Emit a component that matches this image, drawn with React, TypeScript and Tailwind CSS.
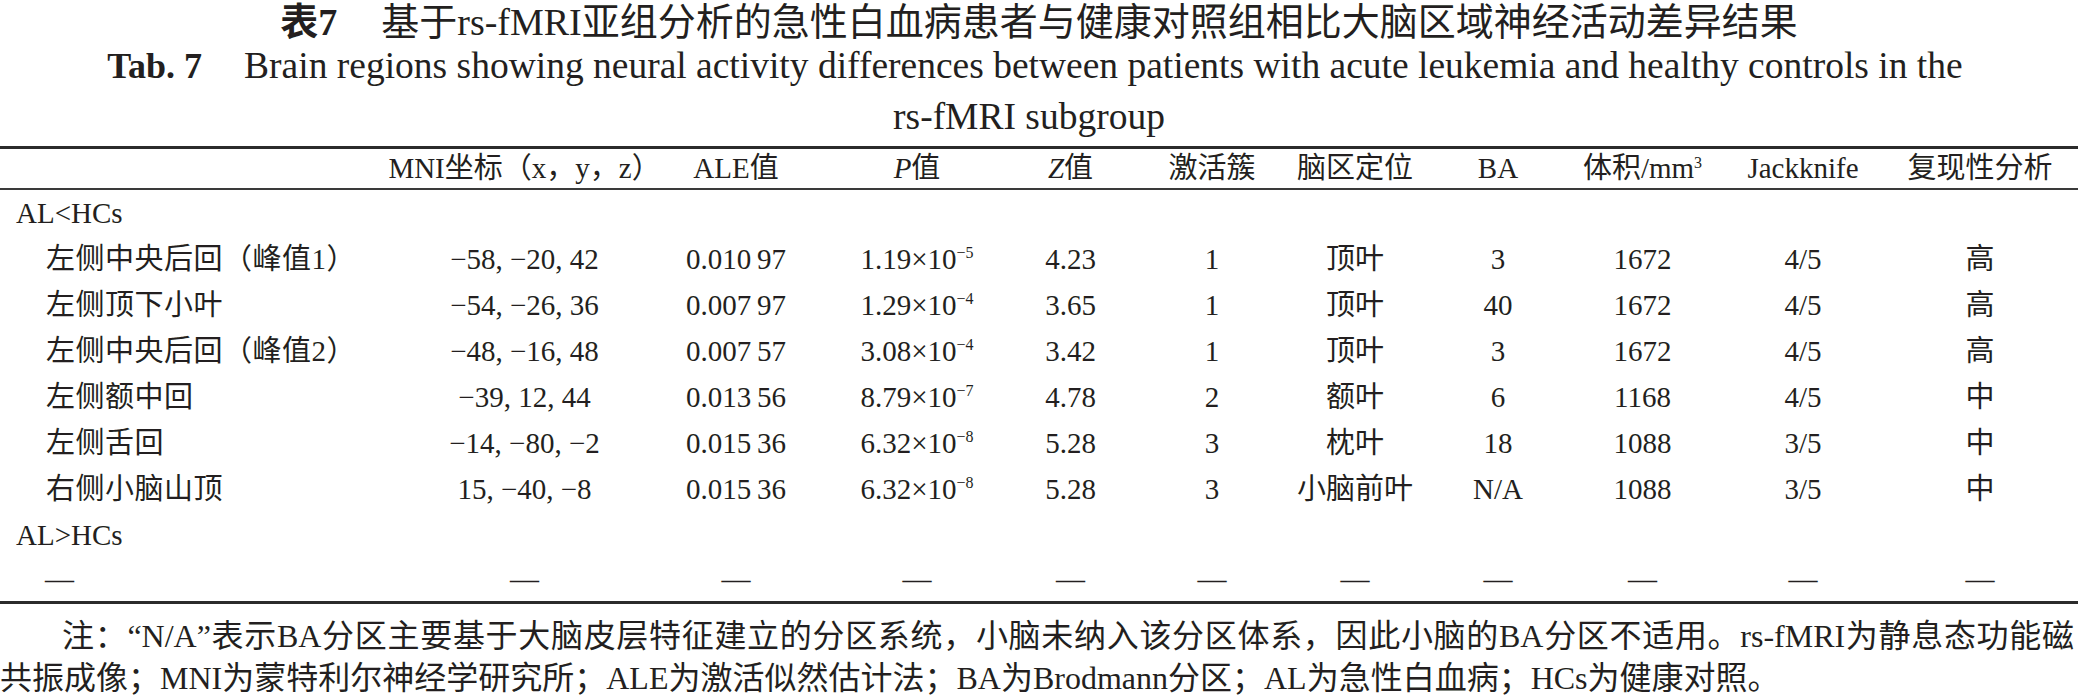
const serif = "font-['Liberation_Serif','Noto_Sans_CJK_SC',serif]";
const cols =
  "grid grid-cols-[412px_225px_198px_164px_143px_140px_146px_140px_149px_172px_182px]";

type Row = {
  region: string;
  mni: string;
  ale: string;
  p: [string, string];
  z: string;
  cluster: string;
  lobe: string;
  ba: string;
  volume: string;
  jack: string;
  repro: string;
};

const rows: Row[] = [
  { region: "左侧中央后回（峰值1）", mni: "−58, −20, 42", ale: "0.010\u200997", p: ["1.19", "−5"], z: "4.23", cluster: "1", lobe: "顶叶", ba: "3", volume: "1672", jack: "4/5", repro: "高" },
  { region: "左侧顶下小叶", mni: "−54, −26, 36", ale: "0.007\u200997", p: ["1.29", "−4"], z: "3.65", cluster: "1", lobe: "顶叶", ba: "40", volume: "1672", jack: "4/5", repro: "高" },
  { region: "左侧中央后回（峰值2）", mni: "−48, −16, 48", ale: "0.007\u200957", p: ["3.08", "−4"], z: "3.42", cluster: "1", lobe: "顶叶", ba: "3", volume: "1672", jack: "4/5", repro: "高" },
  { region: "左侧额中回", mni: "−39, 12, 44", ale: "0.013\u200956", p: ["8.79", "−7"], z: "4.78", cluster: "2", lobe: "额叶", ba: "6", volume: "1168", jack: "4/5", repro: "中" },
  { region: "左侧舌回", mni: "−14, −80, −2", ale: "0.015\u200936", p: ["6.32", "−8"], z: "5.28", cluster: "3", lobe: "枕叶", ba: "18", volume: "1088", jack: "3/5", repro: "中" },
  { region: "右侧小脑山顶", mni: "15, −40, −8", ale: "0.015\u200936", p: ["6.32", "−8"], z: "5.28", cluster: "3", lobe: "小脑前叶", ba: "N/A", volume: "1088", jack: "3/5", repro: "中" },
];

function Sci({ base, exp }: { base: string; exp: string }) {
  return (
    <span>
      {base}×10<sup className="text-[16px] -top-[0.65em]">{exp}</sup>
    </span>
  );
}

export default function App() {
  return (
    <div className={`w-[2078px] h-[696px] bg-white text-[#231f20] ${serif} overflow-hidden`}>
      {/* caption */}
      <div className="flex flex-col items-center">
        <div className="h-[44px] flex items-center text-[38px] leading-none">
          <span className="font-bold">表7</span>
          <span className="ml-[44px]">基于rs-fMRI亚组分析的急性白血病患者与健康对照组相比大脑区域神经活动差异结果</span>
        </div>
        <div className="h-[44px] flex items-center leading-none mr-[8px]">
          <span className="font-bold text-[36px]">Tab. 7</span>
          <span className="ml-[42px] text-[37.5px]">
            Brain regions showing neural activity differences between patients with acute leukemia and healthy controls in the
          </span>
        </div>
        <div className="h-[58px] flex items-center text-[37.5px] leading-none mr-[20px]">rs-fMRI subgroup</div>
      </div>

      {/* table */}
      <div className="border-t-[3px] border-[#2b2b2b] text-[29px] leading-none">
        <div className={`${cols} h-[41px] items-center border-b-2 border-[#3a3a3a]`}>
          <div />
          <div className="flex justify-center whitespace-nowrap">MNI坐标（x，y，z）</div>
          <div className="flex justify-center whitespace-nowrap">ALE值</div>
          <div className="flex justify-center whitespace-nowrap"><i>P</i>值</div>
          <div className="flex justify-center whitespace-nowrap"><i>Z</i>值</div>
          <div className="flex justify-center whitespace-nowrap">激活簇</div>
          <div className="flex justify-center whitespace-nowrap">脑区定位</div>
          <div className="flex justify-center whitespace-nowrap">BA</div>
          <div className="flex justify-center whitespace-nowrap">
            <span>体积/mm<sup className="text-[16px] -top-[0.65em]">3</sup></span>
          </div>
          <div className="flex justify-center whitespace-nowrap">Jackknife</div>
          <div className="flex justify-center whitespace-nowrap">复现性分析</div>
        </div>

        <div className="h-[46px] flex items-center pl-[16px]">AL&lt;HCs</div>
        {rows.map((r) => (
          <div key={r.region} className={`${cols} h-[46px] items-center text-center whitespace-nowrap`}>
            <div className="text-left pl-[46px] tracking-[0.5px]">{r.region}</div>
            <div>{r.mni}</div>
            <div>{r.ale}</div>
            <div><Sci base={r.p[0]} exp={r.p[1]} /></div>
            <div>{r.z}</div>
            <div>{r.cluster}</div>
            <div>{r.lobe}</div>
            <div>{r.ba}</div>
            <div>{r.volume}</div>
            <div>{r.jack}</div>
            <div>{r.repro}</div>
          </div>
        ))}
        <div className="h-[46px] flex items-center pl-[16px]">AL&gt;HCs</div>
        <div className={`${cols} h-[46px] items-center text-center border-b-[3px] border-[#2b2b2b]`}>
          <div className="text-left pl-[45px]">—</div>
          <div>—</div>
          <div>—</div>
          <div>—</div>
          <div>—</div>
          <div>—</div>
          <div>—</div>
          <div>—</div>
          <div>—</div>
          <div>—</div>
          <div>—</div>
        </div>
      </div>

      {/* note */}
      <div className="pt-[11px] text-[32px] leading-[42px] pr-[4px]">
        <div className="pl-[62px] text-justify [text-align-last:justify] [text-justify:inter-character] whitespace-nowrap overflow-hidden">
          注：“N/A”表示BA分区主要基于大脑皮层特征建立的分区系统，小脑未纳入该分区体系，因此小脑的BA分区不适用。rs-fMRI为静息态功能磁
        </div>
        <div className="whitespace-nowrap">
          共振成像；MNI为蒙特利尔神经学研究所；ALE为激活似然估计法；BA为Brodmann分区；AL为急性白血病；HCs为健康对照。
        </div>
      </div>
    </div>
  );
}
